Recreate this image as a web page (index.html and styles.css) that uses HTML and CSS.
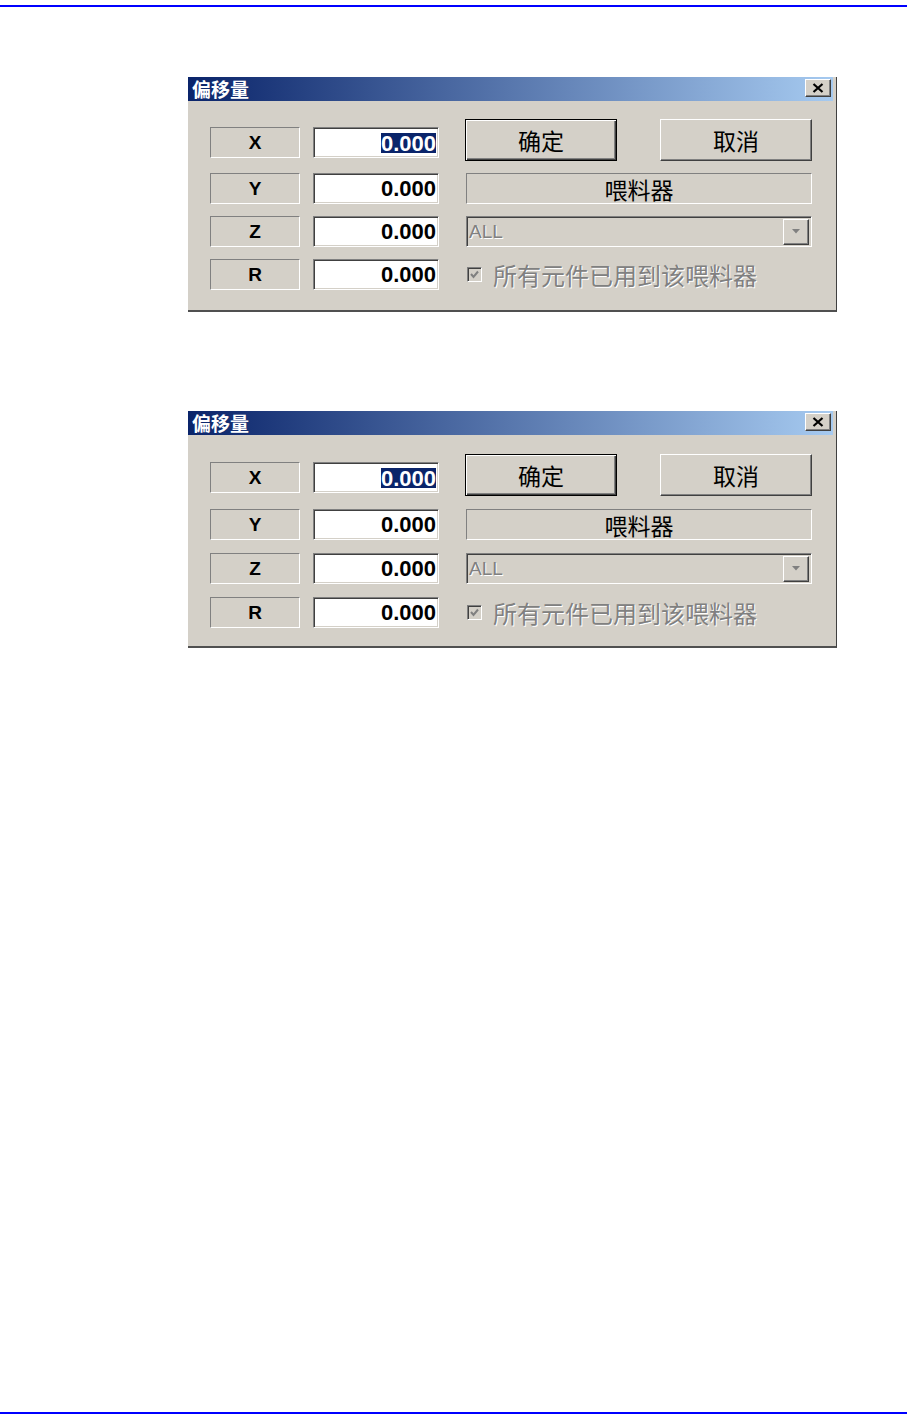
FILE: index.html
```html
<!DOCTYPE html>
<html lang="zh-CN">
<head>
  <meta charset="UTF-8">
  <meta name="viewport" content="width=device-width, initial-scale=1.0">
  <title>偏移量</title>
  <link rel="stylesheet" href="styles.css">
</head>
<body>
<div class="page">
  <div class="rule rule-top"></div>

  <div class="content">

    <!-- 偏移量 对话框 1 -->
    <div class="dialog">
      <div class="titlebar">
        <span class="title">偏移量</span>
        <span class="close-btn">
          <svg width="12" height="10" viewBox="0 0 12 10"><path d="M1.5 1 L10.5 9 M10.5 1 L1.5 9" stroke="#000" stroke-width="2.2" fill="none"/></svg>
        </span>
      </div>
      <div class="dialog-body">
        <div class="row row-first">
          <div class="axis">X</div>
          <div class="field"><span class="selected">0.000</span></div>
          <div class="side buttons">
            <div class="btn btn-default">确定</div>
            <div class="btn">取消</div>
          </div>
        </div>
        <div class="row">
          <div class="axis">Y</div>
          <div class="field">0.000</div>
          <div class="side"><div class="static-box">喂料器</div></div>
        </div>
        <div class="row">
          <div class="axis">Z</div>
          <div class="field">0.000</div>
          <div class="side">
            <div class="combo">
              <span class="combo-text">ALL</span>
              <span class="combo-arrow">
                <svg width="8" height="5" viewBox="0 0 8 5"><polygon points="0,0 8,0 4,4.5" fill="#808080"/></svg>
              </span>
            </div>
          </div>
        </div>
        <div class="row">
          <div class="axis">R</div>
          <div class="field">0.000</div>
          <div class="side check-row">
            <span class="checkbox">
              <svg width="11" height="11" viewBox="0 0 11 11"><path d="M2 5 L4.5 8 L9 2.5" stroke="#808080" stroke-width="2" fill="none"/></svg>
            </span>
            <span class="check-label">所有元件已用到该喂料器</span>
          </div>
        </div>
      </div>
    </div>

    <!-- 偏移量 对话框 2 -->
    <div class="dialog dialog-tall">
      <div class="titlebar">
        <span class="title">偏移量</span>
        <span class="close-btn">
          <svg width="12" height="10" viewBox="0 0 12 10"><path d="M1.5 1 L10.5 9 M10.5 1 L1.5 9" stroke="#000" stroke-width="2.2" fill="none"/></svg>
        </span>
      </div>
      <div class="dialog-body">
        <div class="row row-first">
          <div class="axis">X</div>
          <div class="field"><span class="selected">0.000</span></div>
          <div class="side buttons">
            <div class="btn btn-default">确定</div>
            <div class="btn">取消</div>
          </div>
        </div>
        <div class="row">
          <div class="axis">Y</div>
          <div class="field">0.000</div>
          <div class="side"><div class="static-box">喂料器</div></div>
        </div>
        <div class="row">
          <div class="axis">Z</div>
          <div class="field">0.000</div>
          <div class="side">
            <div class="combo">
              <span class="combo-text">ALL</span>
              <span class="combo-arrow">
                <svg width="8" height="5" viewBox="0 0 8 5"><polygon points="0,0 8,0 4,4.5" fill="#808080"/></svg>
              </span>
            </div>
          </div>
        </div>
        <div class="row">
          <div class="axis">R</div>
          <div class="field">0.000</div>
          <div class="side check-row">
            <span class="checkbox">
              <svg width="11" height="11" viewBox="0 0 11 11"><path d="M2 5 L4.5 8 L9 2.5" stroke="#808080" stroke-width="2" fill="none"/></svg>
            </span>
            <span class="check-label">所有元件已用到该喂料器</span>
          </div>
        </div>
      </div>
    </div>

  </div>

  <div class="rule rule-bottom"></div>
</div>
</body>
</html>
```

FILE: styles.css
```css
body {
  margin: 0;
  background: #fff;
  font-family: "Liberation Sans", "Noto Sans CJK SC", sans-serif;
  color: #000;
}
.page {
  height: 1424px;
  display: flex;
  flex-direction: column;
}
.rule {
  border-top: 2px solid #0000ff;
}
.rule-top {
  margin-top: 5px;
}
.rule-bottom {
  margin-top: auto;
  margin-bottom: 10px;
}
.content {
  padding: 70px 0 0 188px;
  display: flex;
  flex-direction: column;
  gap: 99px;
}

/* dialog window */
.dialog {
  width: 645px;
  padding-right: 3px;
  background: #d4d0c8;
  border-right: 1px solid #404040;
  border-bottom: 2px solid #505050;
}
.titlebar {
  height: 24px;
  box-sizing: border-box;
  padding: 2px 2px 0 4px;
  display: flex;
  justify-content: space-between;
  align-items: flex-start;
  background: linear-gradient(to right, #0a246a, #a6caf0);
}
.title {
  color: #fff;
  font-family: "Noto Sans CJK SC", sans-serif;
  font-weight: bold;
  font-size: 19px;
  line-height: 20px;
}
.close-btn {
  width: 26px;
  height: 18px;
  box-sizing: border-box;
  background: #d4d0c8;
  border: 1px solid;
  border-color: #fff #404040 #404040 #fff;
  box-shadow: inset -1px -1px #808080;
  display: flex;
  align-items: center;
  justify-content: center;
}
.dialog-body {
  padding: 18px 0 20px 22px;
}
.row {
  display: flex;
  align-items: flex-end;
}
.row + .row {
  margin-top: 12px;
}
.row-first .axis,
.row-first .field {
  margin-bottom: 3px;
}
.dialog-tall .dialog-body {
  padding-top: 19px;
  padding-bottom: 18px;
}
.dialog-tall .row + .row {
  margin-top: 13px;
}

/* axis label + value */
.axis {
  width: 90px;
  height: 31px;
  box-sizing: border-box;
  border: 1px solid;
  border-color: #808080 #fff #fff #808080;
  display: flex;
  align-items: center;
  justify-content: center;
  font-weight: bold;
  font-size: 19px;
}
.field {
  width: 126px;
  height: 31px;
  margin-left: 13px;
  box-sizing: border-box;
  background: #fff;
  border: 1px solid;
  border-color: #808080 #fff #fff #808080;
  box-shadow: inset 1px 1px #404040, inset -1px -1px #d4d0c8;
  padding-right: 2px;
  display: flex;
  align-items: center;
  justify-content: flex-end;
  font-weight: bold;
  font-size: 22px;
}
.selected {
  display: inline-block;
  height: 20px;
  line-height: 21px;
  background: #0a246a;
  color: #fff;
}

/* right column */
.side {
  margin-left: 26px;
  width: 347px;
}
.buttons {
  display: flex;
  justify-content: space-between;
}
.btn {
  width: 152px;
  height: 42px;
  box-sizing: border-box;
  border: 1px solid;
  border-color: #fff #404040 #404040 #fff;
  box-shadow: inset -1px -1px #808080;
  display: flex;
  align-items: center;
  justify-content: center;
  font-size: 23px;
}
.btn-default {
  border-color: #000;
  box-shadow: inset 1px 1px #fff, inset -1px -1px #404040, inset -2px -2px #808080;
}
.static-box {
  width: 346px;
  height: 31px;
  margin-left: 1px;
  box-sizing: border-box;
  border: 1px solid;
  border-color: #808080 #fff #fff #808080;
  display: flex;
  align-items: center;
  justify-content: center;
  font-size: 23px;
}
.combo {
  width: 346px;
  height: 31px;
  margin-left: 1px;
  box-sizing: border-box;
  border: 1px solid;
  border-color: #808080 #fff #fff #808080;
  box-shadow: inset 1px 1px #404040, inset -1px -1px #d4d0c8;
  padding: 1px 2px 1px 2px;
  display: flex;
  align-items: center;
  justify-content: space-between;
}
.combo-text {
  font-size: 19px;
  color: #808080;
  text-shadow: 1px 1px 0 #fff;
}
.combo-arrow {
  width: 26px;
  height: 26px;
  box-sizing: border-box;
  border: 1px solid;
  border-color: #fff #404040 #404040 #fff;
  box-shadow: inset -1px -1px #808080;
  display: flex;
  align-items: center;
  justify-content: center;
}
.check-row {
  height: 31px;
  display: flex;
  align-items: center;
  padding-left: 2px;
  box-sizing: border-box;
}
.checkbox {
  width: 15px;
  height: 15px;
  box-sizing: border-box;
  border: 1px solid;
  border-color: #808080 #fff #fff #808080;
  box-shadow: inset 1px 1px #404040, inset -1px -1px #d4d0c8;
  display: flex;
  align-items: center;
  justify-content: center;
}
.check-label {
  margin-left: 11px;
  font-size: 24px;
  color: #808080;
  text-shadow: 1px 1px 0 #fff;
}
```
